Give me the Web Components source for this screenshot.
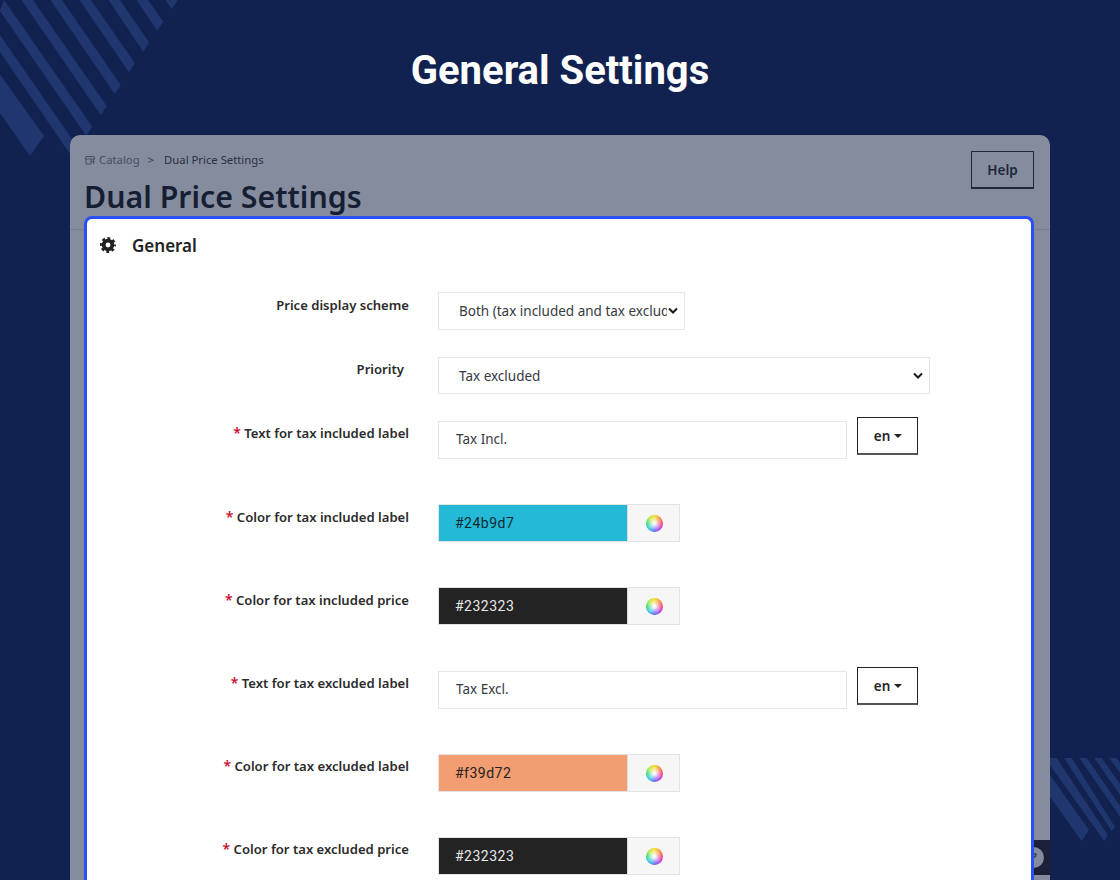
<!DOCTYPE html>
<html>
<head>
<meta charset="utf-8">
<title>General Settings</title>
<style>
html, body { margin: 0; height: 880px; overflow: hidden; background: #112250; }
</style>
</head>
<body>
<settings-page></settings-page>

<template id="settings-page-tpl">
<style>
:host { display: block; position: relative; height: 880px; overflow: hidden; background: #112250; font-family: "Noto Sans", "Open Sans", sans-serif; }
.deco { position: absolute; }
.deco.tl { left: 0; top: 0; }
.deco.br { left: 1050px; top: 758px; }
h1 { margin: 0; padding-top: 45px; height: 135px; box-sizing: border-box; text-align: center; font: 700 40px/52px Roboto, sans-serif; color: #fff; position: relative; }
.shell { position: relative; margin: 0 70px; height: 745px; border-radius: 10px 10px 0 0; background: #858c9e; overflow: hidden; padding: 0 16px 0 14px; }
.head { display: flex; justify-content: space-between; height: 95px; box-sizing: border-box; margin: 0 -16px 0 -14px; padding: 16px 16px 0 14px; border-bottom: 1px solid #777e91; }
.crumbs { display: flex; align-items: center; font-size: 11.3px; line-height: 18px; color: #2a3145; gap: 8px; }
.crumbs .first { color: #474e63; display: flex; align-items: center; gap: 3px; }
.crumbs .sep { color: #2f3649; margin-right: 2px; }
h2 { margin: 7px 0 0; font-size: 30.3px; line-height: 42px; font-weight: 600; color: #161e33; }
.help { width: 63px; height: 38px; box-sizing: border-box; border: 1px solid #20273b; border-bottom-width: 2px; display: flex; align-items: center; justify-content: center; font-size: 13.5px; font-weight: 600; color: #20273b; }
.card { position: relative; margin-top: -14px; background: #fff; border: 3px solid #2a50f5; border-bottom: 0; border-radius: 8px 8px 0 0; height: 680px; box-sizing: border-box; padding: 0 13px; }
.title { display: flex; align-items: center; height: 52px; font-size: 17px; font-weight: 600; color: #232323; gap: 16px; }
.rows { padding-top: 21px; }
.bubble { position: absolute; left: 964px; top: 705px; width: 16px; height: 35px; background: #1a2138; }
.bubble i { position: absolute; left: -11px; top: 7px; width: 21px; height: 21px; border-radius: 50%; background: #858c9e; color: #3c4357; font: italic 700 12px/21px "Noto Sans", sans-serif; text-align: center; }
</style>
<svg class="deco tl" width="180" height="160" viewBox="0 0 180 160" fill="#20366f">
  <polygon points="0,74.600 44,136 30,156 0,113"/>
  <polygon points="0,35 78,147.700 72,156.700 0,52"/>
  <polygon points="4,0 92.300,126.700 86.300,135.700 0,11"/>
  <polygon points="33,0 106.700,106 100.700,115 21.500,0"/>
  <polygon points="62,0 120.700,85 114.700,94 50.500,0"/>
  <polygon points="91,0 135,63.300 129,72.300 79.500,0"/>
  <polygon points="120,0 149.300,42.700 143.300,51.700 108.500,0"/>
  <polygon points="148,0 163.300,21.700 157.300,30.700 136.500,0"/>
  <polygon points="177.700,0 171.700,9 165.500,0"/>
</svg>
<svg class="deco br" width="70" height="100" viewBox="0 0 70 100" fill="#20366f">
  <polygon points="0,17 39,72 31.700,83 0,38.700"/>
  <polygon points="0,0 6.700,0 57.700,77 54.300,83 0,7"/>
  <polygon points="14,0 21.700,0 65,69 61.700,73"/>
  <polygon points="29.300,0 36.700,0 70,48 70,58.600"/>
  <polygon points="44.300,0 51.700,0 70,26 70,37"/>
  <polygon points="59.300,0 66.700,0 70,5 70,15"/>
</svg>
<h1>General Settings</h1>
<div class="shell">
  <div class="head">
    <div>
      <div class="crumbs">
        <span class="first">
          <svg width="12" height="12" viewBox="0 0 12 12" fill="none" stroke="currentColor" stroke-width="1"><path d="M2 2.500h8l1 2.500H1zM2 5v5h5V5M7 7.500h3.500M9.500 5v5"/></svg>
          Catalog
        </span>
        <span class="sep">&gt;</span>
        <span>Dual Price Settings</span>
      </div>
      <h2>Dual Price Settings</h2>
    </div>
    <div class="help">Help</div>
  </div>
  <div class="bubble"><i>?</i></div>
  <div class="card">
    <div class="title">
      <svg width="16" height="16" viewBox="-8 -8 16 16" fill="none" stroke="#232323"><circle r="4.300" stroke-width="3.800"/><circle r="6.500" stroke-width="3" stroke-dasharray="2.700 2.400" stroke-dashoffset="1.350"/></svg>
      <span>General</span>
    </div>
    <div class="rows">
      <form-row label="Price display scheme" h="65"><select-box width="247" height="38">Both (tax included and tax excluded)</select-box></form-row>
      <form-row label="Priority" h="64" shift="5" top="3"><select-box width="492" height="37">Tax excluded</select-box></form-row>
      <form-row label="Text for tax included label" req h="83" top="3"><text-box value="Tax Incl."></text-box></form-row>
      <form-row label="Color for tax included label" req h="83"><color-box value="#24b9d7" fg="#0f2a30"></color-box></form-row>
      <form-row label="Color for tax included price" req h="84"><color-box value="#232323" fg="#e8e8e8"></color-box></form-row>
      <form-row label="Text for tax excluded label" req h="83" top="3"><text-box value="Tax Excl."></text-box></form-row>
      <form-row label="Color for tax excluded label" req h="83" top="3"><color-box value="#f39d72" fg="#232323"></color-box></form-row>
      <form-row label="Color for tax excluded price" req h="83" top="3"><color-box value="#232323" fg="#e8e8e8"></color-box></form-row>
    </div>
  </div>
</div>
</template>

<script>
class SettingsPage extends HTMLElement {
  constructor() {
    super()
    this.attachShadow({ mode: "open" })
    this.shadowRoot.appendChild(document.getElementById("settings-page-tpl").content.cloneNode(true))
  }
}

class FormRow extends HTMLElement {
  constructor() {
    super()
    this.attachShadow({ mode: "open" })
    const req = this.hasAttribute("req") ? '<b>*</b> ' : ''
    this.shadowRoot.innerHTML = `
<style>
:host { display: flex; height: ${this.getAttribute("h")}px; }
.label { width: 309px; flex: none; box-sizing: border-box; padding-right: ${+(this.getAttribute("shift") || 0)}px; padding-top: ${this.getAttribute("top") || 4}px; text-align: right; font-size: 13.1px; line-height: 18px; font-weight: 600; color: #2b2b2b; white-space: nowrap; }
b { color: #c8102e; font-weight: 600; font-size: 14px; }
.field { margin-left: 29px; }
</style>
<div class="label">${req}${this.getAttribute("label")}</div>
<div class="field"><slot></slot></div>`
  }
}

class SelectBox extends HTMLElement {
  constructor() {
    super()
    this.attachShadow({ mode: "open" })
    this.shadowRoot.innerHTML = `
<style>
:host { display: flex; align-items: center; width: ${this.getAttribute("width")}px; height: ${this.getAttribute("height")}px; box-sizing: border-box; border: 1px solid #e6e6e6; padding: 0 6px 0 20px; font-size: 13.5px; color: #363a3f; background: #fff; }
.t { flex: 1; overflow: hidden; white-space: nowrap; }
svg { flex: none; margin-left: 1px; }
</style>
<span class="t"><slot></slot></span>
<svg width="10" height="8" viewBox="0 0 10 8" fill="none" stroke="#1a1a1a" stroke-width="2"><path d="M1 1.500l4 4 4-4"/></svg>`
  }
}

class TextBox extends HTMLElement {
  constructor() {
    super()
    this.attachShadow({ mode: "open" })
    this.shadowRoot.innerHTML = `
<style>
:host { display: flex; gap: 10px; }
.input { width: 409px; height: 38px; box-sizing: border-box; border: 1px solid #e6e6e6; padding: 0 0 2px 17px; display: flex; align-items: center; font-size: 13.5px; color: #363a3f; }
.lang { width: 61px; height: 38px; margin-top: -4px; box-sizing: border-box; border: 1px solid #232323; border-bottom: 2px solid #555; display: flex; align-items: center; justify-content: center; gap: 4px; padding-left: 1px; font-size: 13.5px; font-weight: 600; color: #232323; }
.caret { width: 0; height: 0; border: 4.500px solid transparent; border-top-color: #232323; border-bottom: 0; }
</style>
<div class="input">${this.getAttribute("value")}</div>
<div class="lang">en<span class="caret"></span></div>`
  }
}

class ColorBox extends HTMLElement {
  constructor() {
    super()
    this.attachShadow({ mode: "open" })
    const v = this.getAttribute("value")
    this.shadowRoot.innerHTML = `
<style>
:host { display: flex; width: 242px; height: 38px; box-sizing: border-box; border: 1px solid #e3e3e3; }
.swatch { width: 189px; background: ${v}; color: ${this.getAttribute("fg")}; padding-left: 16px; box-sizing: border-box; display: flex; align-items: center; font: 14px Roboto, sans-serif; letter-spacing: .5px; border-right: 1px solid #dcdcdc; }
.btn { flex: 1; background: #f6f6f6; display: flex; align-items: center; justify-content: center; padding-left: 2px; }
.wheel { width: 17px; height: 17px; border-radius: 50%; background: radial-gradient(circle, rgba(255,255,255,.95) 0 8%, rgba(255,255,255,0) 68%), conic-gradient(#f6d92c, #f78a2c, #f2407e, #b23ae6, #5a62f0, #2fc6ec, #38dc78, #b6e83a, #f6d92c); }
</style>
<div class="swatch">${v}</div>
<div class="btn"><span class="wheel"></span></div>`
  }
}

customElements.define("settings-page", SettingsPage)
customElements.define("form-row", FormRow)
customElements.define("select-box", SelectBox)
customElements.define("text-box", TextBox)
customElements.define("color-box", ColorBox)
</script>
</body>
</html>
